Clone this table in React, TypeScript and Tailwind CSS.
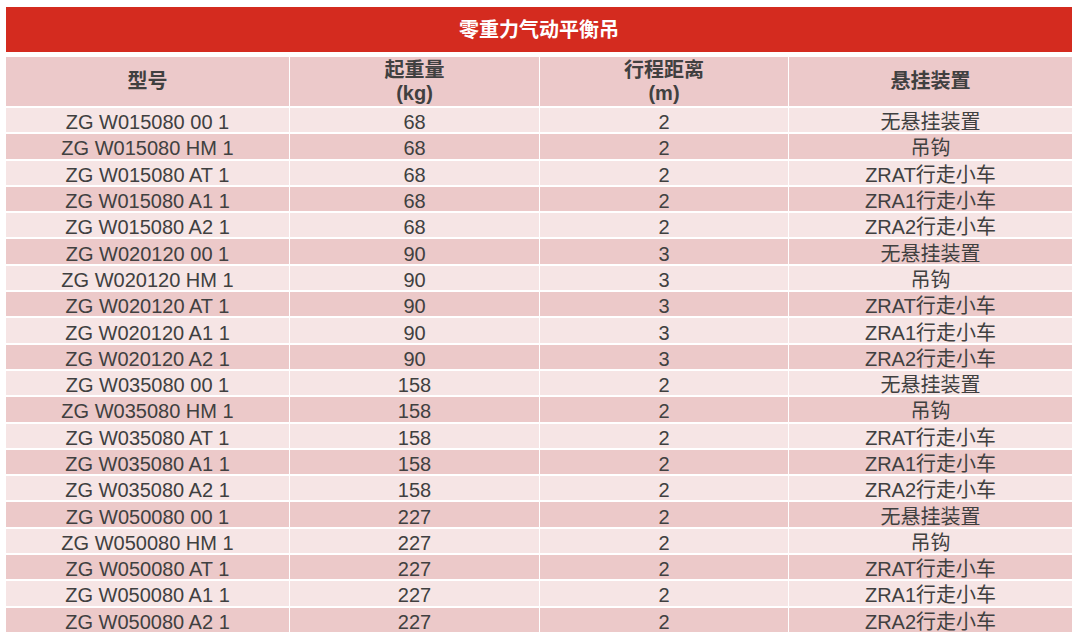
import React from "react";

const rows: [string, string, string, string][] = [];
const groups: [string, string, string][] = [
  ["015080", "68", "2"],
  ["020120", "90", "3"],
  ["035080", "158", "2"],
  ["050080", "227", "2"],
];
const suffixes: [string, string][] = [
  ["00 1", "无悬挂装置"],
  ["HM 1", "吊钩"],
  ["AT 1", "ZRAT行走小车"],
  ["A1 1", "ZRA1行走小车"],
  ["A2 1", "ZRA2行走小车"],
];
for (const g of groups) {
  for (const s of suffixes) {
    rows.push([`ZG W${g[0]} ${s[0]}`, g[1], g[2], s[1]]);
  }
}

const font = { fontFamily: '"Liberation Sans", Arial, "Noto Sans CJK SC", sans-serif' };

export default function App() {
  return (
    <div className="w-[1076px] h-[641px] bg-white pl-[6px] pt-[7px]" style={font}>
      <div className="w-[1066px]">
        <div className="h-[45px] bg-[#d42b1f] flex items-center justify-center text-white font-bold text-[20px]">
          零重力气动平衡吊
        </div>
        <div className="mt-[5px] grid grid-cols-[283px_249px_248px_283px] gap-x-[1px] gap-y-[2px] text-[#404040]">
          <div className="h-[49px] bg-[#ecc9ca] flex items-center justify-center font-bold text-[20px] leading-[23px]">型号</div>
          <div className="h-[49px] bg-[#ecc9ca] flex flex-col items-center justify-center font-bold text-[20px] leading-[23px]">
            <span>起重量</span>
            <span>(kg)</span>
          </div>
          <div className="h-[49px] bg-[#ecc9ca] flex flex-col items-center justify-center font-bold text-[20px] leading-[23px]">
            <span>行程距离</span>
            <span>(m)</span>
          </div>
          <div className="h-[49px] bg-[#ecc9ca] flex items-center justify-center font-bold text-[20px] leading-[23px]">悬挂装置</div>
          {rows.map((r, i) => {
            const bg = i % 2 === 0 ? "bg-[#f6e5e5]" : "bg-[#ecc9c9]";
            return (
              <React.Fragment key={i}>
                {r.map((c, j) => (
                  <div
                    key={j}
                    className={`h-[24.3px] ${bg} flex items-center justify-center text-[20px] leading-none pt-[4px] whitespace-nowrap`}
                  >
                    {c}
                  </div>
                ))}
              </React.Fragment>
            );
          })}
        </div>
      </div>
    </div>
  );
}
